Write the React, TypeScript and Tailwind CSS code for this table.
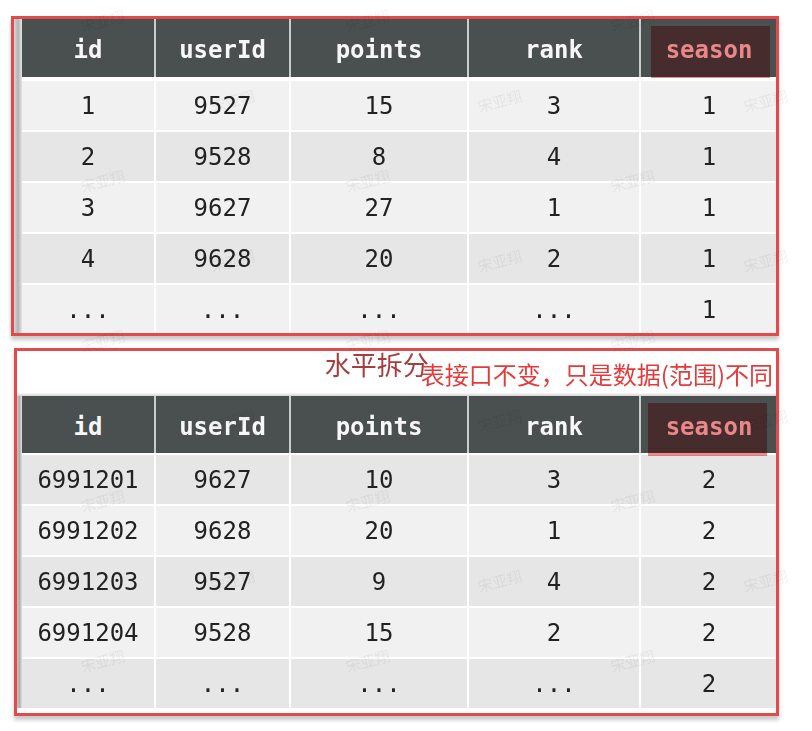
import React from "react";

const colW = ["w-[132px]", "w-[133px]", "w-[176px]", "w-[170px]", "w-[136px]"];
const headers = ["id", "userId", "points", "rank", "season"];

const season1 = [
  ["1", "9527", "15", "3", "1"],
  ["2", "9528", "8", "4", "1"],
  ["3", "9627", "27", "1", "1"],
  ["4", "9628", "20", "2", "1"],
  ["...", "...", "...", "...", "1"],
];

const season2 = [
  ["6991201", "9627", "10", "3", "2"],
  ["6991202", "9628", "20", "1", "2"],
  ["6991203", "9527", "9", "4", "2"],
  ["6991204", "9528", "15", "2", "2"],
  ["...", "...", "...", "...", "2"],
];

// faint watermark grid
const marks: { x: number; y: number }[] = [];
for (let i = 0; i < 9; i++) {
  const xs = i % 2 === 0 ? [80, 345, 610] : [210, 477, 743];
  xs.forEach((x) => marks.push({ x, y: 13 + i * 80 }));
}

function DataTable({
  rows,
  darkFirst,
  headerH,
  headGap,
  overlay,
}: {
  rows: string[][];
  darkFirst: boolean;
  headerH: string;
  headGap: string;
  overlay: string;
}) {
  return (
    <div className="w-[756px] shrink-0 bg-white">
      <div className={`flex gap-[2px] bg-[#c9cccc] ${headerH}`}>
        {headers.map((h, i) => (
          <div
            key={h}
            className={`relative flex items-center justify-center bg-[#4a4f4f] pt-[4px] text-[24px] font-bold text-[#f7f7f7] ${colW[i]}`}
          >
            {h}
            {h === "season" && (
              <div className={`absolute bg-[#f08c8c] mix-blend-multiply ${overlay}`} />
            )}
          </div>
        ))}
      </div>
      <div className={`flex flex-col gap-[2px] ${headGap}`}>
        {rows.map((r, ri) => {
          const dark = darkFirst ? ri % 2 === 0 : ri % 2 === 1;
          return (
            <div key={ri} className="flex h-[49px] gap-[2px]">
              {r.map((c, ci) => (
                <div
                  key={ci}
                  className={`flex items-center justify-center text-[24px] text-[#222] ${colW[ci]} ${
                    dark ? "bg-[#e6e6e6]" : "bg-[#f1f1f1]"
                  }`}
                >
                  {c}
                </div>
              ))}
            </div>
          );
        })}
      </div>
    </div>
  );
}

export default function App() {
  return (
    <div className="relative h-[731px] w-[812px] overflow-hidden bg-white font-['DejaVu_Sans_Mono',monospace]">
      {/* season 1 */}
      <div className="pl-[11px] pt-[16px]">
        <div className="flex h-[320px] w-[768px] overflow-hidden border-[3px] border-[#e14b4b] shadow-[0_4px_4px_rgba(0,0,0,0.22)]">
          <div className="w-[8px] shrink-0 bg-gradient-to-r from-[#d6d6d6] via-[#b4b4b4] to-[#e4e4e4]" />
          <div className="flex flex-col">
            <div className="h-[1px] bg-[#c4c4c4]" />
            <DataTable
              rows={season1}
              darkFirst={false}
              headerH="h-[58px]"
              headGap="pt-[4px]"
              overlay="left-[10px] top-[7px] h-[52px] w-[119px]"
            />
          </div>
        </div>
      </div>

      {/* season 2 */}
      <div className="pl-[14px] pt-[12px]">
        <div className="flex h-[368px] w-[765px] flex-col overflow-hidden border-[3px] border-[#e14b4b] shadow-[0_4px_4px_rgba(0,0,0,0.22)]">
          <div className="flex h-[42px] shrink-0 items-start justify-end pr-[3px] font-['Noto_Sans_CJK_SC',sans-serif]">
            <span className="-mr-[8px] text-[26px] leading-none text-[#a53f3f]">水平拆分</span>
            <span className="mt-[11px] text-[24px] leading-none text-[#e33b3b]">
              表接口不变，只是数据(范围)不同
            </span>
          </div>
          <div className="h-[3px] shrink-0 bg-gradient-to-b from-[#fafafa] to-[#d4d4d4]" />
          <div className="flex">
            <div className="w-[5px] shrink-0 bg-gradient-to-r from-[#c4c4c4] via-[#b0b0b0] to-[#e0e0e0]" />
            <DataTable
              rows={season2}
              darkFirst={true}
              headerH="h-[57px]"
              headGap="pt-[2px]"
              overlay="left-[7px] top-[7px] h-[53px] w-[119px]"
            />
          </div>
        </div>
      </div>

      {/* watermark */}
      {marks.map((m, i) => (
        <span
          key={i}
          className="pointer-events-none absolute -rotate-[15deg] font-['Noto_Sans_CJK_SC',sans-serif] text-[15px] leading-none text-[rgba(0,0,0,0.06)]"
          style={{ left: m.x, top: m.y }}
        >
          宋亚翔
        </span>
      ))}
    </div>
  );
}
